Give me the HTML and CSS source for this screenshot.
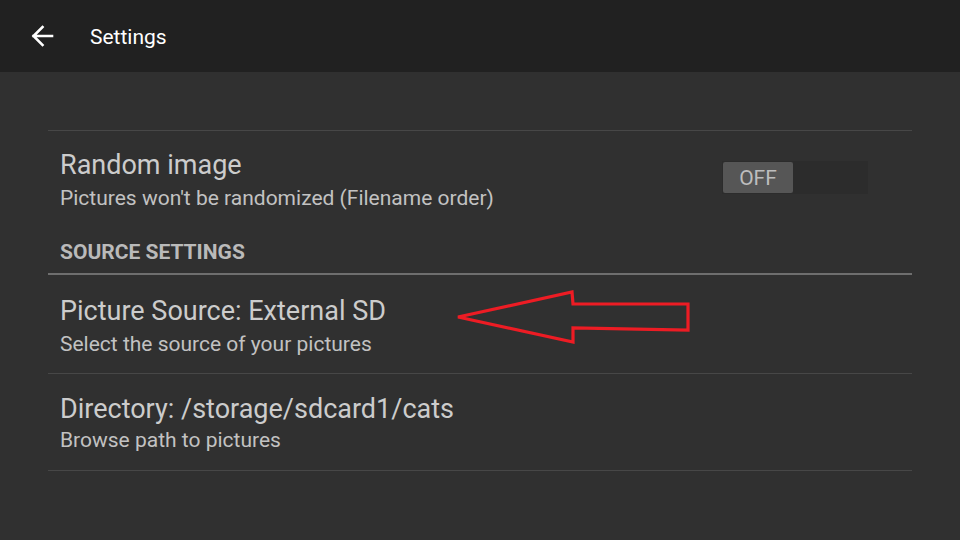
FILE: index.html
```html
<!DOCTYPE html>
<html>
<head>
<meta charset="utf-8">
<link rel="stylesheet" href="styles.css">
</head>
<body>
<div class="app">
  <header class="bar">
    <svg class="back" width="24" height="24" viewBox="0 0 24 24"><path d="M22 12H3.5M12.5 3L3.5 12l9 9" fill="none" stroke="#fff" stroke-width="2.6" stroke-linecap="square"/></svg>
    <span class="bar-title">Settings</span>
  </header>
  <main class="content">
    <div class="list">
      <div class="item item-toggle">
        <div class="texts">
          <div class="title">Random image</div>
          <div class="summary">Pictures won't be randomized (Filename order)</div>
        </div>
        <div class="switch"><div class="thumb">OFF</div></div>
      </div>
      <div class="section">SOURCE SETTINGS</div>
      <div class="item item-source">
        <div class="texts">
          <div class="title">Picture Source: External SD</div>
          <div class="summary">Select the source of your pictures</div>
        </div>
        <svg class="annot" width="236" height="56" viewBox="0 0 236 56"><polygon points="2,27 116,2 117,14 232,14 232,40 117,38 117,52" fill="none" stroke="#ed1c24" stroke-width="3.2" stroke-linejoin="miter"/></svg>
      </div>
      <div class="item item-dir">
        <div class="texts">
          <div class="title">Directory: /storage/sdcard1/cats</div>
          <div class="summary summary-tight">Browse path to pictures</div>
        </div>
      </div>
    </div>
  </main>
</div>
</body>
</html>
```
FILE: styles.css
```css
html, body {
  margin: 0;
  padding: 0;
  width: 960px;
  height: 540px;
  overflow: hidden;
  background: #303030;
  font-family: Roboto, "Noto Sans", sans-serif;
}
.app {
  width: 960px;
  height: 540px;
  display: flex;
  flex-direction: column;
}
.bar {
  height: 72px;
  background: #212121;
  display: flex;
  align-items: center;
  padding-left: 30px;
  box-sizing: border-box;
}
.back {
  display: block;
}
.bar-title {
  margin-left: 36px;
  color: #ffffff;
  font-size: 21px;
  margin-top: 1px;
}
.content {
  padding: 58px 48px 0 48px;
}
.list {
  border-top: 1px solid #474747;
}
.item {
  display: flex;
  align-items: flex-start;
  border-bottom: 1px solid #474747;
  padding-left: 12px;
  padding-top: 21px;
  box-sizing: border-box;
  position: relative;
}
.item-toggle {
  border-bottom: none;
  height: 95px;
  padding-top: 19px;
}
.item-source {
  height: 99px;
}
.item-dir {
  height: 97px;
  padding-top: 20px;
}
.texts {
  flex: 1;
}
.title {
  color: #cccccc;
  font-size: 27px;
  line-height: 30px;
}
.summary {
  color: #c2c2c2;
  font-size: 21px;
  line-height: 26px;
  margin-top: 5px;
}
.summary-tight {
  margin-top: 3px;
}
.switch {
  width: 146px;
  height: 33px;
  background: #2c2c2c;
  margin-right: 44px;
  margin-top: 11px;
  display: flex;
  align-items: center;
  padding-left: 1px;
  box-sizing: border-box;
}
.thumb {
  width: 70px;
  height: 31px;
  background: #565656;
  border-radius: 2px;
  color: #bdbdbd;
  font-size: 21px;
  display: flex;
  align-items: center;
  justify-content: center;
}
.section {
  color: #bababa;
  font-size: 21px;
  font-weight: bold;
  padding-left: 12px;
  padding-top: 14px;
  height: 49px;
  line-height: 24px;
  border-bottom: 2px solid #6e6e6e;
  box-sizing: border-box;
}
.annot {
  position: absolute;
  left: 408px;
  top: 15px;
}
```
